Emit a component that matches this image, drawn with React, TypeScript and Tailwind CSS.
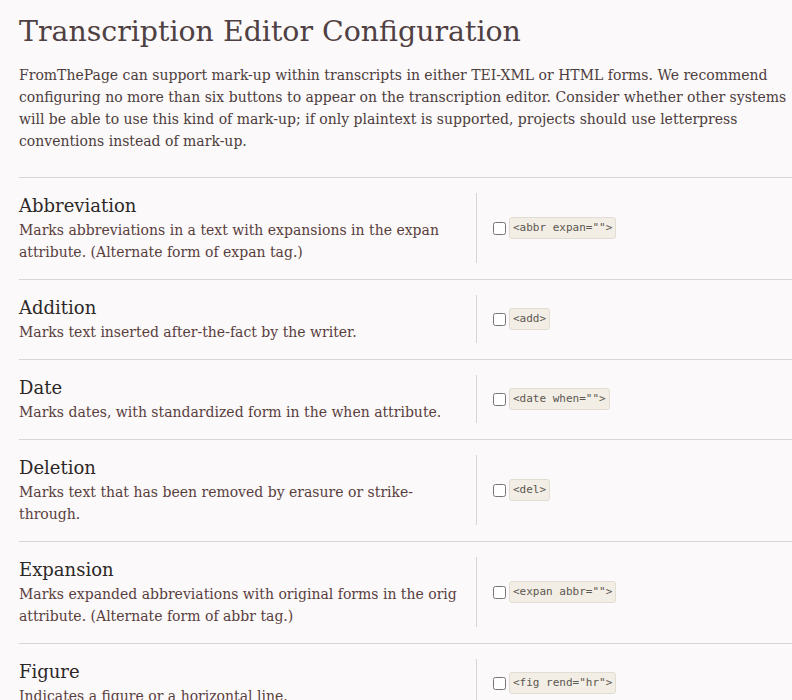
import React from "react";

type Tag = { title: string; desc: string; code: string };

const tags: Tag[] = [
  {
    title: "Abbreviation",
    desc: "Marks abbreviations in a text with expansions in the expan attribute. (Alternate form of expan tag.)",
    code: '<abbr expan="">',
  },
  {
    title: "Addition",
    desc: "Marks text inserted after-the-fact by the writer.",
    code: "<add>",
  },
  {
    title: "Date",
    desc: "Marks dates, with standardized form in the when attribute.",
    code: '<date when="">',
  },
  {
    title: "Deletion",
    desc: "Marks text that has been removed by erasure or strike-through.",
    code: "<del>",
  },
  {
    title: "Expansion",
    desc: "Marks expanded abbreviations with original forms in the orig attribute. (Alternate form of abbr tag.)",
    code: '<expan abbr="">',
  },
  {
    title: "Figure",
    desc: "Indicates a figure or a horizontal line.",
    code: '<fig rend="hr">',
  },
  {
    title: "Footnote",
    desc: "Marks a footnote in the text.",
    code: "<footnote>",
  },
];

const TagRow: React.FC<{ tag: Tag }> = ({ tag }) => (
  <div className="flex border-t border-[#d9d5d5] pt-[15px] pb-[16px]">
    <div className="w-[458px] shrink-0 pr-[14px] border-r border-[#d9d5d5]">
      <h3 className="text-[18px] leading-[26px] text-[#2d2828]">{tag.title}</h3>
      <p className="text-[14px] leading-[22px] text-[#5a3e3e]">{tag.desc}</p>
    </div>
    <div className="flex items-center pl-[16px]">
      <label className="flex items-center gap-[3px]">
        <input type="checkbox" className="w-[13px] h-[13px] m-0 accent-gray-500" />
        <code className="px-[3px] py-[2px] rounded-[3px] border border-[#e2ddd2] bg-[#f2eee5] text-[#5c5650] text-[11px] leading-[16px] font-['DejaVu_Sans_Mono',monospace]">
          {tag.code}
        </code>
      </label>
    </div>
  </div>
);

export default function App() {
  return (
    <div className="min-h-[700px] bg-[#fbf9f9] pl-[19px] pt-[12px] font-['DejaVu_Serif',serif]">
      <h1 className="text-[28.4px] leading-[40px] text-[#4f4143] mb-[12px]">
        Transcription Editor Configuration
      </h1>
      <p className="text-[14px] leading-[22px] text-[#4d3d3d] mb-[25px]">
        FromThePage can support mark-up within transcripts in either TEI-XML or HTML forms. We recommend
        <br />
        configuring no more than six buttons to appear on the transcription editor. Consider whether other systems
        <br />
        will be able to use this kind of mark-up; if only plaintext is supported, projects should use letterpress
        <br />
        conventions instead of mark-up.
      </p>
      <div>
        {tags.map((t) => (
          <TagRow key={t.title} tag={t} />
        ))}
      </div>
    </div>
  );
}
